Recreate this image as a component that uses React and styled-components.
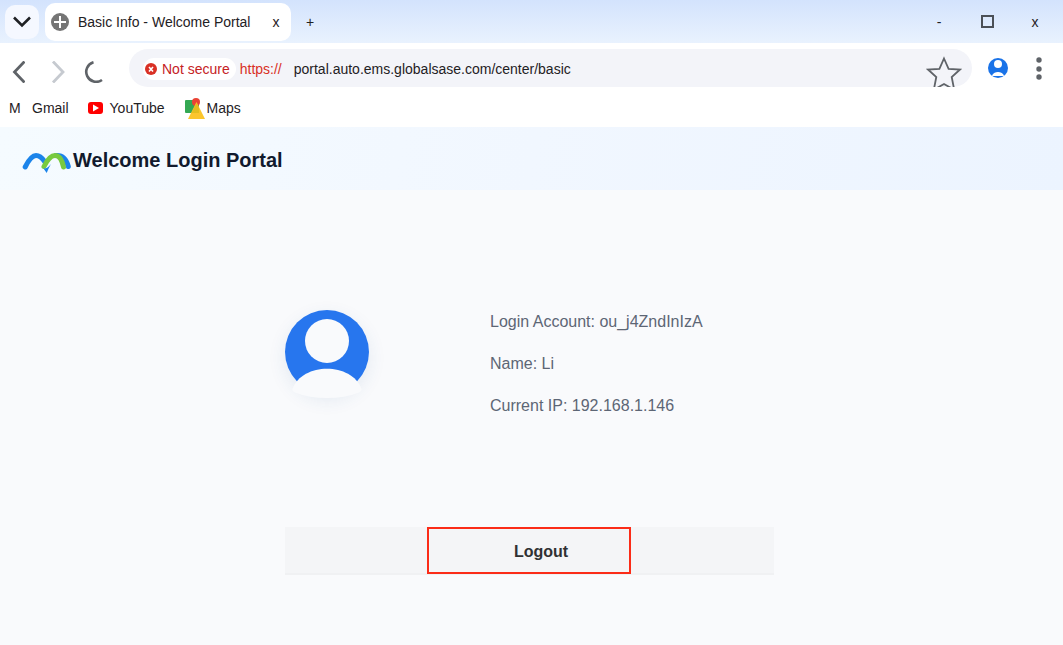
import { useState } from "react";
import styled, { createGlobalStyle } from "styled-components";

const bookmarks = [
  { id: 1, title: "Gmail", icon: GmailIcon },
  { id: 2, title: "YouTube", icon: YouTubeIcon },
  { id: 3, title: "Maps", icon: MapsIcon },
];

const accountInfo = [
  { id: 1, label: "Login Account", value: "ou_j4ZndInIzA" },
  { id: 2, label: "Name", value: "Li" },
  { id: 3, label: "Current IP", value: "192.168.1.146" },
];

export default function App() {
  const [url, setUrl] = useState("portal.auto.ems.globalsase.com/center/basic");

  return (
    <>
      <GlobalStyle />
      <TabStrip>
        <TabSearch aria-label="Search tabs">
          <svg width="18" height="12" viewBox="0 0 18 12">
            <path
              d="M1 1.5l8 8 8-8"
              fill="none"
              stroke="#1f2124"
              strokeWidth="2.6"
            />
          </svg>
        </TabSearch>
        <Tab>
          <svg width="18" height="18" viewBox="0 0 18 18">
            <circle cx="9" cy="9" r="9" fill="#757575" />
            <path d="M9 3v12M3 9h12" stroke="#fff" strokeWidth="2" />
          </svg>
          <TabTitle>Basic Info - Welcome Portal</TabTitle>
          <TextButton aria-label="Close tab">x</TextButton>
        </Tab>
        <TextButton aria-label="New tab">+</TextButton>
        <WindowControls>
          <WindowButton aria-label="Minimize">-</WindowButton>
          <WindowButton aria-label="Maximize">
            <svg width="13" height="13" viewBox="0 0 13 13">
              <path
                d="M1 1h11v11H1z"
                fill="none"
                stroke="#4b5057"
                strokeWidth="2"
              />
            </svg>
          </WindowButton>
          <WindowButton aria-label="Close">x</WindowButton>
        </WindowControls>
      </TabStrip>

      <Toolbar>
        <NavButtons>
          <IconButton aria-label="Back">
            <svg width="14" height="22" viewBox="0 0 14 22">
              <path
                d="M13.5 0.5L3.5 11 13.5 21.5"
                fill="none"
                stroke="#5f6368"
                strokeWidth="2.8"
              />
            </svg>
          </IconButton>
          <IconButton aria-label="Forward">
            <svg width="14" height="22" viewBox="0 0 14 22">
              <path
                d="M2 0.5L12 11 2 21.5"
                fill="none"
                stroke="#c6cad0"
                strokeWidth="2.8"
              />
            </svg>
          </IconButton>
          <IconButton aria-label="Reload">
            <svg width="20" height="22" viewBox="0 0 20 22">
              <path
                d="M10.5 1.2A10 10 0 1 0 19 19"
                fill="none"
                stroke="#5f6368"
                strokeWidth="2.6"
              />
            </svg>
          </IconButton>
        </NavButtons>
        <AddressBar>
          <Security>
            <svg width="12" height="12" viewBox="0 0 12 12">
              <circle cx="6" cy="6" r="6" fill="#d93025" />
              <path
                d="M4 4l4 4.5M8 4L4 8.5"
                stroke="#fff"
                strokeWidth="1.6"
              />
            </svg>
            Not secure
          </Security>
          <Scheme>https://</Scheme>
          <UrlInput
            aria-label="Address"
            value={url}
            onChange={(e) => setUrl(e.target.value)}
          />
          <StarButton aria-label="Bookmark this page">
            <svg width="36" height="32" viewBox="0 0 36 32">
              <path
                d="M18 3.5L22.6 13.8 34 14.5 25.7 22 28.2 34.8 18 29 7.8 34.8 10.3 22 2 14.5 13.4 13.8z"
                fill="none"
                stroke="#5f6368"
                strokeWidth="1.8"
              />
            </svg>
          </StarButton>
        </AddressBar>
        <ToolbarActions>
          <IconButton aria-label="Profile">
            <svg width="20" height="20" viewBox="0 0 20 20">
              <circle cx="10" cy="10" r="10" fill="#1a73e8" />
              <circle cx="10" cy="6" r="4" fill="#fff" />
              <path d="M4 18c1-5.2 11-5.2 12 0z" fill="#fff" />
            </svg>
          </IconButton>
          <IconButton aria-label="Menu">
            <svg width="6" height="24" viewBox="0 0 6 24">
              <circle cx="3" cy="4" r="2.7" fill="#5f6368" />
              <circle cx="3" cy="13" r="2.7" fill="#5f6368" />
              <circle cx="3" cy="21" r="2.7" fill="#5f6368" />
            </svg>
          </IconButton>
        </ToolbarActions>
      </Toolbar>

      <BookmarkBar>
        {bookmarks.map(({ id, title, icon: Icon }) => (
          <Bookmark key={id} href="#">
            <Icon />
            {title}
          </Bookmark>
        ))}
      </BookmarkBar>

      <PortalHeader>
        <Logo />
        <PortalTitle>Welcome Login Portal</PortalTitle>
      </PortalHeader>

      <Content>
        <Profile>
          <Avatar>
            <svg width="84" height="88" viewBox="0 0 84 88">
              <circle cx="42" cy="42" r="42" fill="#2776ee" />
              <circle cx="42" cy="31" r="22" fill="#f9fafc" />
              <path
                d="M7.5 79C17 52 67 52 76.5 79Q77 81 74 82.5Q60 88 42 88T10 82.5Q7 81 7.5 79z"
                fill="#f9fafc"
              />
            </svg>
          </Avatar>
          <Details>
            {accountInfo.map((info) => (
              <li key={info.id}>
                {info.label}: {info.value}
              </li>
            ))}
          </Details>
        </Profile>
        <ActionBar>
          <LogoutButton>Logout</LogoutButton>
        </ActionBar>
      </Content>
    </>
  );
}

function GmailIcon() {
  return <GmailMark>M</GmailMark>;
}

function YouTubeIcon() {
  return (
    <svg width="16" height="12" viewBox="0 0 16 12">
      <rect width="15" height="12" rx="3" fill="#f00" />
      <path d="M5 2.5L11 6 5 9.5z" fill="#fff" />
    </svg>
  );
}

function MapsIcon() {
  return (
    <svg width="17" height="22" viewBox="0 0 17 22" overflow="visible">
      <rect x="1" y="3" width="14" height="13" rx="1" fill="#34a853" />
      <circle cx="12" cy="5" r="4" fill="#ea4335" />
      <path d="M12.5 5L21 22H4z" fill="#fbc52d" />
      <path d="M12.5 6L15 11v5H7.5z" fill="#e3bd1f" />
    </svg>
  );
}

function Logo() {
  return (
    <svg width="51" height="27" viewBox="0 0 51 27">
      <g fill="none" strokeLinecap="round" strokeWidth="5">
        <path d="M3.2 21C6.5 14.5 10 9.6 14 9.6C18 9.6 20.500 12.500 23 16" stroke="#1b84ea" />
        <path d="M34 9.6C41 9 44.500 14 46.300 20.500" stroke="#1b84ea" />
        <path
          d="M22 20.500C25.500 13.500 29 9.6 33 9.6C37.500 9.6 40 14 41.500 21"
          stroke="#78ca3f"
        />
      </g>
      <path d="M21.500 22.500Q25 23 29 18Q26.500 22 24.700 27z" fill="#1b84ea" />
    </svg>
  );
}

const GlobalStyle = createGlobalStyle`
  * {
    box-sizing: border-box;
  }

  body {
    margin: 0;
    min-height: 100vh;
    background: #f9fafc;
    font-family: "Liberation Sans", Arial, sans-serif;
    font-size: 14px;
    color: #1f2124;
  }

  button,
  input {
    padding: 0;
    border: none;
    background: none;
    font: inherit;
    color: inherit;
  }

  svg {
    display: block;
    flex-shrink: 0;
  }
`;

const TabStrip = styled.div`
  display: flex;
  align-items: center;
  height: 43px;
  padding: 0 18px 0 5px;
  background: linear-gradient(#d3e3fd, #e9f2fe);
`;

const TabSearch = styled.button`
  display: flex;
  align-items: center;
  justify-content: center;
  width: 34px;
  height: 34px;
  border-radius: 10px;
  background: #f5f8ff;
`;

const Tab = styled.div`
  display: flex;
  align-items: center;
  width: 246px;
  height: 38px;
  margin: 0 9px 0 6px;
  padding: 0 5px 0 6px;
  border-radius: 10px;
  background: #ffffff;
`;

const TabTitle = styled.span`
  flex: 1;
  margin-left: 9px;
  white-space: nowrap;
`;

const TextButton = styled.button`
  width: 20px;
  height: 20px;
`;

const WindowControls = styled.div`
  display: flex;
  gap: 28px;
  margin-left: auto;
`;

const WindowButton = styled.button`
  display: flex;
  align-items: center;
  justify-content: center;
  width: 20px;
  height: 20px;
`;

const Toolbar = styled.div`
  display: flex;
  align-items: center;
  height: 50px;
  padding: 0 21px 0 11px;
  background: #ffffff;
`;

const NavButtons = styled.div`
  display: flex;
  gap: 26px;
  padding-top: 8px;

  > :last-child {
    margin-left: -8px;
  }
`;

const IconButton = styled.button`
  display: flex;
  align-items: center;
`;

const AddressBar = styled.div`
  display: flex;
  flex: 1;
  align-items: center;
  height: 38px;
  margin: 0 16px 0 26px;
  padding: 2px 10px 0 14px;
  border-radius: 19px;
  background: #f3f4f9;
`;

const Security = styled.span`
  display: flex;
  align-items: center;
  gap: 5px;
  height: 22px;
  padding: 0 6px 0 2px;
  border-radius: 11px;
  background: #ffffff;
  color: #c5221f;
`;

const Scheme = styled.span`
  margin: 0 12px 0 4px;
  color: #d93025;
`;

const UrlInput = styled.input`
  flex: 1;
  min-width: 0;
  outline: none;
`;

const StarButton = styled.button`
  align-self: flex-end;
`;

const ToolbarActions = styled.div`
  display: flex;
  align-items: center;
  gap: 28px;
`;

const BookmarkBar = styled.nav`
  display: flex;
  align-items: center;
  gap: 19px;
  height: 34px;
  padding: 0 9px 4px;
  background: #ffffff;
`;

const Bookmark = styled.a`
  display: flex;
  align-items: center;
  gap: 6px;
  height: 22px;
  color: inherit;
  text-decoration: none;
`;

const GmailMark = styled.span`
  width: 17px;
`;

const PortalHeader = styled.header`
  display: flex;
  align-items: center;
  height: 63px;
  padding: 2px 22px 0;
  background: linear-gradient(100deg, #f5fbff, #f1f7ff 50%, #ecf4ff);
`;

const PortalTitle = styled.h1`
  margin: 0;
  font-size: 20px;
  line-height: 24px;
  color: #111a2e;
`;

const Content = styled.main`
  padding: 120px 16px 24px 12px;
`;

const Profile = styled.section`
  display: flex;
  align-items: flex-start;
  gap: 121px;
  max-width: 489px;
  margin: 0 auto 109px;
`;

const Avatar = styled.div`
  height: 84px;
  border-radius: 50%;
  box-shadow: 0 6px 18px rgba(39, 90, 150, 0.1);
`;

const Details = styled.ul`
  display: flex;
  flex-direction: column;
  gap: 18px;
  margin: 0;
  padding: 0;
  list-style: none;
  font-size: 16px;
  line-height: 24px;
  color: #5d6675;
`;

const ActionBar = styled.div`
  display: flex;
  justify-content: center;
  max-width: 489px;
  height: 48px;
  margin: 0 auto;
  padding-right: 1px;
  background: #f4f5f7;
  box-shadow: inset 0 -2px #f0f1f3;
`;

const LogoutButton = styled.button`
  width: 204px;
  height: 47px;
  padding: 2px 0 0 24px;
  border: 2px solid #fb2c18;
  font-size: 16px;
  font-weight: bold;
  color: #303133;
`;
